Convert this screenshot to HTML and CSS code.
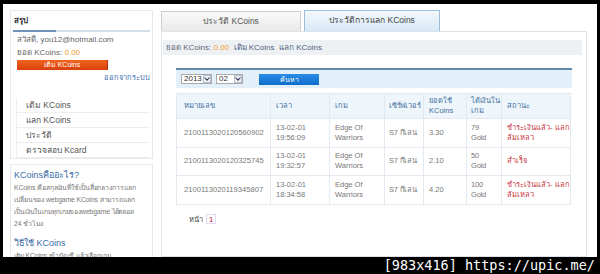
FILE: index.html
```html
<!DOCTYPE html>
<html lang="th">
<head>
<meta charset="utf-8">
<title>KCoins</title>
<link rel="stylesheet" href="styles.css">
</head>
<body>
<div class="page">
  <aside class="side">
    <section class="box summary">
      <h2 class="box-title">สรุป</h2>
      <div class="rule"><span class="rule-dark"></span></div>
      <p class="info">สวัสดี, you12@hotmail.com</p>
      <p class="info">ยอด KCoins: <span class="amount">0.00</span></p>
      <a class="topup-btn">เติม KCoins</a>
      <p class="logout"><a>ออกจากระบบ</a></p>
      <ul class="menu">
        <li>เติม KCoins</li>
        <li>แลก KCoins</li>
        <li>ประวัติ</li>
        <li>ตรวจสอบ Kcard</li>
      </ul>
    </section>
    <section class="box about">
      <h3 class="about-title">KCoinsคืออะไร?</h3>
      <p class="about-text">KCoins คือสกุลเงินที่ใช้เป็นสื่อกลางการแลก<br>เปลี่ยนของ webgame KCoins สามารถแลก<br>เป็นเงินในเกมทุกเกมของwebgame ได้ตลอด<br>24 ชั่วโมง</p>
      <h3 class="about-title how">วิธีใช้ KCoins</h3>
      <p class="about-text">เติม KCoins เข้าบัญชี แล้วเลือกเกม</p>
    </section>
  </aside>
  <main class="main">
    <nav class="tabs">
      <div class="tab">ประวัติ KCoins</div>
      <div class="tab active">ประวัติการแลก KCoins</div>
    </nav>
    <div class="panel">
      <div class="balance">ยอด KCoins: <span class="amount">0.00</span>&nbsp;&nbsp;<a>เติม KCoins</a>&nbsp;&nbsp;<a>แลก KCoins</a></div>
      <div class="inner">
        <div class="search">
          <span class="select"><span class="val">2013</span><span class="arrow"><svg width="6" height="4" viewBox="0 0 6 4"><path d="M0.5 0.5 L3 3.2 L5.5 0.5" fill="none" stroke="#335" stroke-width="1.1"/></svg></span></span>
          <span class="select"><span class="val">02</span><span class="arrow"><svg width="6" height="4" viewBox="0 0 6 4"><path d="M0.5 0.5 L3 3.2 L5.5 0.5" fill="none" stroke="#335" stroke-width="1.1"/></svg></span></span>
          <a class="search-btn">ค้นหา</a>
        </div>
        <table class="history">
          <colgroup>
            <col style="width:94px"><col style="width:59px"><col style="width:55px"><col style="width:39px"><col style="width:43px"><col style="width:35px"><col style="width:69px">
          </colgroup>
          <thead>
            <tr><th class="first">หมายเลข</th><th>เวลา</th><th>เกม</th><th class="tight">เซิร์ฟเวอร์</th><th>ยอดใช้<br>KCoins</th><th class="tight">ได้เงินใน<br>เกม</th><th>สถานะ</th></tr>
          </thead>
          <tbody>
            <tr><td class="first">2100113020120560902</td><td>13-02-01<br>19:56:09</td><td>Edge Of<br>Warriors</td><td class="tight">S7 กีเลน</td><td>3.30</td><td class="tight">79<br>Gold</td><td class="status">ชำระเงินแล้ว- แลก<br>ล้มเหลว</td></tr>
            <tr><td class="first">2100113020120325745</td><td>13-02-01<br>19:32:57</td><td>Edge Of<br>Warriors</td><td class="tight">S7 กีเลน</td><td>2.10</td><td class="tight">50<br>Gold</td><td class="status">สำเร็จ</td></tr>
            <tr><td class="first">2100113020119345807</td><td>13-02-01<br>18:34:58</td><td>Edge Of<br>Warriors</td><td class="tight">S7 กีเลน</td><td>4.20</td><td class="tight">100<br>Gold</td><td class="status">ชำระเงินแล้ว- แลก<br>ล้มเหลว</td></tr>
          </tbody>
        </table>
        <div class="pager">หน้า <span class="pg">1</span></div>
      </div>
    </div>
  </main>
</div>
<div class="caption">[983x416] https://upic.me/</div>
</body>
</html>
```

FILE: styles.css
```css
* { box-sizing: border-box; }
html, body { margin: 0; padding: 0; }
body {
  background: #000;
  width: 600px;
  height: 274px;
  overflow: hidden;
  font-family: "Liberation Sans", "Noto Sans", "DejaVu Sans", sans-serif;
  font-size: 8px;
  color: #666;
}
p, h2, h3, ul { margin: 0; padding: 0; }
a { color: inherit; text-decoration: none; }

.page {
  margin: 4px 3px 0 3px;
  height: 253px;
  background: #fff;
  display: flex;
  gap: 8px;
  padding: 6px 0 0 7px;
  overflow: hidden;
}

/* ---------- side ---------- */
.side { width: 143px; flex: none; display: flex; flex-direction: column; gap: 5px; }
.box { border: 1px solid #e8e8e8; }
.summary { height: 150px; padding: 4px 2px 0 2px; }
.box-title { font-size: 8px; font-weight: bold; color: #333; line-height: 12px; padding-left: 1px; }
.rule { height: 2px; background: #d2dde8; margin-top: 3px; }
.rule-dark { display: block; width: 43px; height: 2px; background: #6f93b8; }
.info { padding-left: 4px; line-height: 13px; }
.info:first-of-type { margin-top: 1px; }
.amount { color: #f39a2c; }
.topup-btn {
  display: block;
  margin: 1px 0 0 4px;
  width: 91px;
  height: 10px;
  line-height: 10px;
  text-align: center;
  color: #fff;
  font-size: 7px;
  background: linear-gradient(#f0641e, #d9400c);
  border-right: 1px solid #a53010;
}
.logout { text-align: right; line-height: 14px; margin-top: 1px; color: #3b6fb0; font-size: 7.5px; }
.menu { list-style: none; margin: 13px 0 0 3px; border-left: 1px solid #eee; }
.menu li { height: 15px; line-height: 15px; padding-left: 9px; border-bottom: 1px solid #eee; font-size: 8.5px; color: #555; }

.about { flex: 1; padding: 4px 2px 0 3px; }
.about-title { font-size: 9px; font-weight: normal; color: #3a6ea8; line-height: 12px; }
.about-text { font-size: 6.8px; line-height: 12px; color: #777; white-space: nowrap; margin-top: 1px; letter-spacing: -0.1px; }
.how { margin-top: 7px; }

/* ---------- main ---------- */
.main { width: 426px; flex: none; display: flex; flex-direction: column; }
.tabs { display: flex; gap: 3px; align-items: flex-end; height: 21px; }
.tab {
  width: 140px;
  height: 20px;
  line-height: 19px;
  text-align: center;
  font-size: 8.5px;
  color: #555;
  border: 1px solid #cfcfcf;
  border-bottom: none;
  background: linear-gradient(#fafafa, #e9e9e9);
}
.tab.active {
  width: 136px;
  height: 21px;
  border-color: #9fbdd6;
  color: #444;
  background: linear-gradient(#f4f9fd, #d6e8f6);
}
.panel { flex: 1; border: 1px solid #dde3ea; padding: 8px 4px 0 1px; }
.balance { height: 15px; line-height: 15px; background: #eef1f4; padding-left: 3px; color: #667; }
.balance a { color: #4d5f80; }
.inner { margin: 13px 10px 0 13px; }
.search {
  height: 20px;
  border-top: 2px solid #5f88aa;
  background: #e3eff9;
  display: flex;
  align-items: center;
  padding-left: 5px;
  gap: 4px;
}
.select {
  display: inline-flex;
  align-items: center;
  justify-content: space-between;
  height: 10px;
  border: 1px solid #a9a9a9;
  background: #fff;
  font-size: 8px;
  color: #333;
  padding-left: 2px;
}
.select .val { line-height: 8px; }
.select .arrow {
  display: inline-flex;
  align-items: center;
  justify-content: center;
  width: 8px;
  height: 8px;
  border: 1px solid #b8c0cc;
  background: #eef2f6;
}
.select:nth-child(1) { width: 31px; }
.select:nth-child(2) { width: 27px; }
.search-btn {
  margin-left: 12px;
  width: 60px;
  height: 11px;
  line-height: 11px;
  text-align: center;
  color: #fff;
  font-size: 7px;
  background: linear-gradient(#2b8ce6, #0e6ccb);
}

.history {
  margin-top: 5px;
  width: 394px;
  table-layout: fixed;
  border-collapse: collapse;
  font-size: 7.5px;
}
.history th, .history td {
  border: 1px solid #e3e9ef;
  text-align: left;
  vertical-align: middle;
  padding: 0 2px 0 5px;
  line-height: 10px;
  white-space: nowrap;
  overflow: hidden;
}
.history th {
  height: 25px;
  font-weight: normal;
  color: #3f6ea0;
  background: #eef6fc;
}
.history td { height: 28.5px; color: #777; }
.history .first { padding-left: 7px; font-size: 7.6px; }
.history .tight { padding-left: 4px; padding-right: 0; letter-spacing: -0.2px; }
.history td.status { color: #c8343c; }

.pager { margin: 8px 0 0 13px; color: #444; display: flex; align-items: center; gap: 3px; font-size: 7.5px; }
.pg { display: inline-block; width: 10px; height: 10px; line-height: 9px; text-align: center; border: 1px solid #dde; color: #c03; }

.caption {
  height: 17px;
  line-height: 17px;
  text-align: right;
  padding-right: 5px;
  color: #fff;
  font-family: "DejaVu Sans Mono", "Liberation Mono", monospace;
  font-size: 13.5px;
}
```
